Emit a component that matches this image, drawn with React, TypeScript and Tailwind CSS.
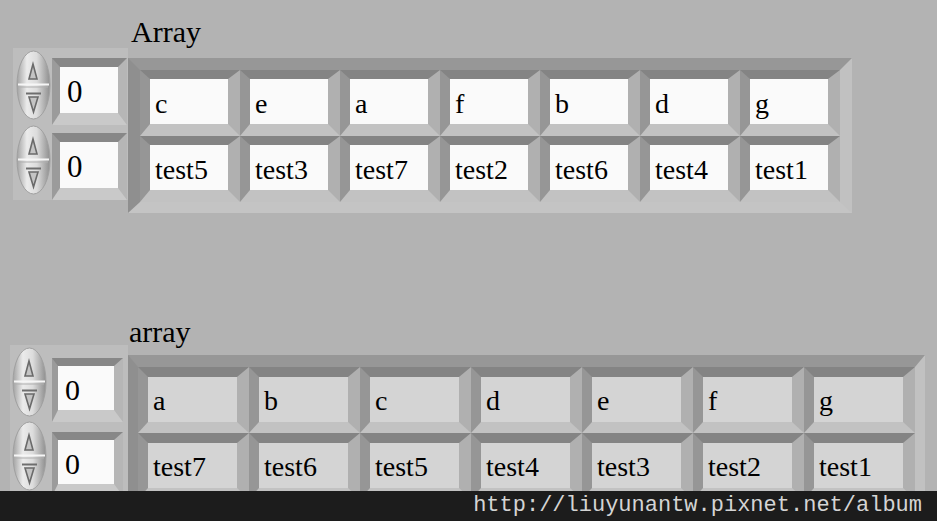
import React from "react";

const topRows = [
  ["c", "e", "a", "f", "b", "d", "g"],
  ["test5", "test3", "test7", "test2", "test6", "test4", "test1"],
];

const bottomRows = [
  ["a", "b", "c", "d", "e", "f", "g"],
  ["test7", "test6", "test5", "test4", "test3", "test2", "test1"],
];

// index spinner (the little up/down pill)
const Spinner: React.FC = () => (
  <svg width="35" height="70" viewBox="0 0 35 70" className="block shrink-0">
    <defs>
      <linearGradient id="pill" x1="0" x2="1" y1="0" y2="0">
        <stop offset="0" stopColor="#a2a2a2" />
        <stop offset="0.3" stopColor="#ebebeb" />
        <stop offset="0.6" stopColor="#dcdcdc" />
        <stop offset="1" stopColor="#8e8e8e" />
      </linearGradient>
    </defs>
    <ellipse cx="17.5" cy="35" rx="16.5" ry="34" fill="url(#pill)" stroke="#a0a0a0" />
    <path d="M17 14 L13 29 L21 29 Z" fill="#c4c4c4" stroke="#6a6a6a" strokeWidth="1.6" />
    <line x1="2" y1="34.5" x2="33" y2="34.5" stroke="#f6f6f6" strokeWidth="2" />
    <line x1="3" y1="37" x2="32" y2="37" stroke="#b0b0b0" strokeWidth="1" />
    <line x1="10" y1="43.5" x2="25" y2="43.5" stroke="#6e6e6e" strokeWidth="2" />
    <path d="M13 47 L22 47 L17.5 62 Z" fill="#c4c4c4" stroke="#6a6a6a" strokeWidth="1.6" />
  </svg>
);

const TopNumeric: React.FC = () => (
  <div className="w-[75px] h-[67px] border-t-[9px] border-l-[8px] border-r-[9px] border-b-[12px] border-t-[#878787] border-l-[#9b9b9b] border-r-[#b6b6b6] border-b-[#c9c9c9] bg-[#fafafa] pl-[7px] font-['Liberation_Serif'] text-[31px] leading-[30px] pt-[10px]">
    0
  </div>
);

const BottomNumeric: React.FC = () => (
  <div className="w-[71px] h-[64px] border-t-[8px] border-l-[6px] border-r-[9px] border-b-[12px] border-t-[#878787] border-l-[#9b9b9b] border-r-[#b6b6b6] border-b-[#c9c9c9] bg-[#fafafa] pl-[7px] font-['Liberation_Serif'] text-[30px] leading-[30px] pt-[9px]">
    0
  </div>
);

export default function App() {
  return (
    <div className="relative w-[937px] h-[521px] overflow-hidden bg-[#b3b3b3] text-black">
      {/* upper cluster: Array (controls) */}
      <div className="pt-[17px]">
        <div className="ml-[131px] h-[31px] font-['Liberation_Serif'] text-[30px] leading-[30px]">Array</div>
        <div className="flex items-start">
          <div className="ml-[13px] w-[115px] h-[152px] bg-[#bdbdbd] flex flex-col">
            {[0, 1].map((i) => (
              <div key={i} className="flex items-start h-[75px]">
                <div className="ml-[3px] mt-[2px]">
                  <Spinner />
                </div>
                <div className="ml-[1px] mt-[10px]">
                  <TopNumeric />
                </div>
              </div>
            ))}
          </div>
          <div className="mt-[10px] w-[724px] h-[155px] border-t-[12px] border-l-[12px] border-r-[12px] border-b-[11px] border-t-[#979797] border-l-[#8f8f8f] border-r-[#c1c1c1] border-b-[#c4c4c4] flex flex-col">
            {topRows.map((row, r) => (
              <div key={r} className="flex">
                {row.map((t, c) => (
                  <div
                    key={c}
                    className="w-[100px] h-[66px] border-t-[9px] border-l-[10px] border-r-[12px] border-b-[12px] border-t-[#848484] border-l-[#969696] border-r-[#b0b0b0] border-b-[#c2c2c2]"
                  >
                    <div className="h-full bg-[#fafafa] pl-[5px] pt-[11px] font-['Liberation_Serif'] text-[28px] leading-[28px] whitespace-nowrap">
                      {t}
                    </div>
                  </div>
                ))}
              </div>
            ))}
          </div>
        </div>
      </div>

      {/* lower cluster: array (indicators) */}
      <div className="mt-[104px]">
        <div className="ml-[129px] h-[28px] font-['Liberation_Serif'] text-[30px] leading-[30px]">array</div>
        <div className="flex items-start">
          <div className="ml-[10px] w-[118px] h-[160px] bg-[#bdbdbd] flex flex-col">
            {[0, 1].map((i) => (
              <div key={i} className="flex items-start h-[74px]">
                <div className="ml-[2px] mt-[2px]">
                  <Spinner />
                </div>
                <div className="ml-[5px] mt-[13px]">
                  <BottomNumeric />
                </div>
              </div>
            ))}
          </div>
          <div className="mt-[10px] w-[797px] h-[155px] border-t-[12px] border-l-[10px] border-r-[10px] border-b-[11px] border-t-[#979797] border-l-[#8f8f8f] border-r-[#c1c1c1] border-b-[#c4c4c4] flex flex-col">
            {bottomRows.map((row, r) => (
              <div key={r} className="flex">
                {row.map((t, c) => (
                  <div
                    key={c}
                    className="w-[111px] h-[66px] border-t-[10px] border-l-[10px] border-r-[12px] border-b-[11px] border-t-[#848484] border-l-[#969696] border-r-[#b0b0b0] border-b-[#c2c2c2]"
                  >
                    <div className="h-full bg-[#d4d4d4] pl-[5px] pt-[10px] font-['Liberation_Serif'] text-[28px] leading-[28px] whitespace-nowrap">
                      {t}
                    </div>
                  </div>
                ))}
              </div>
            ))}
          </div>
        </div>
      </div>

      {/* watermark strip over the bottom */}
      <div className="absolute bottom-0 left-0 w-full h-[30px] bg-[#1c1c1c] text-right pr-[15px] text-[22px] leading-[30px] text-[#d4d4d4] font-['Liberation_Mono',monospace]">
        http://liuyunantw.pixnet.net/album
      </div>
    </div>
  );
}
